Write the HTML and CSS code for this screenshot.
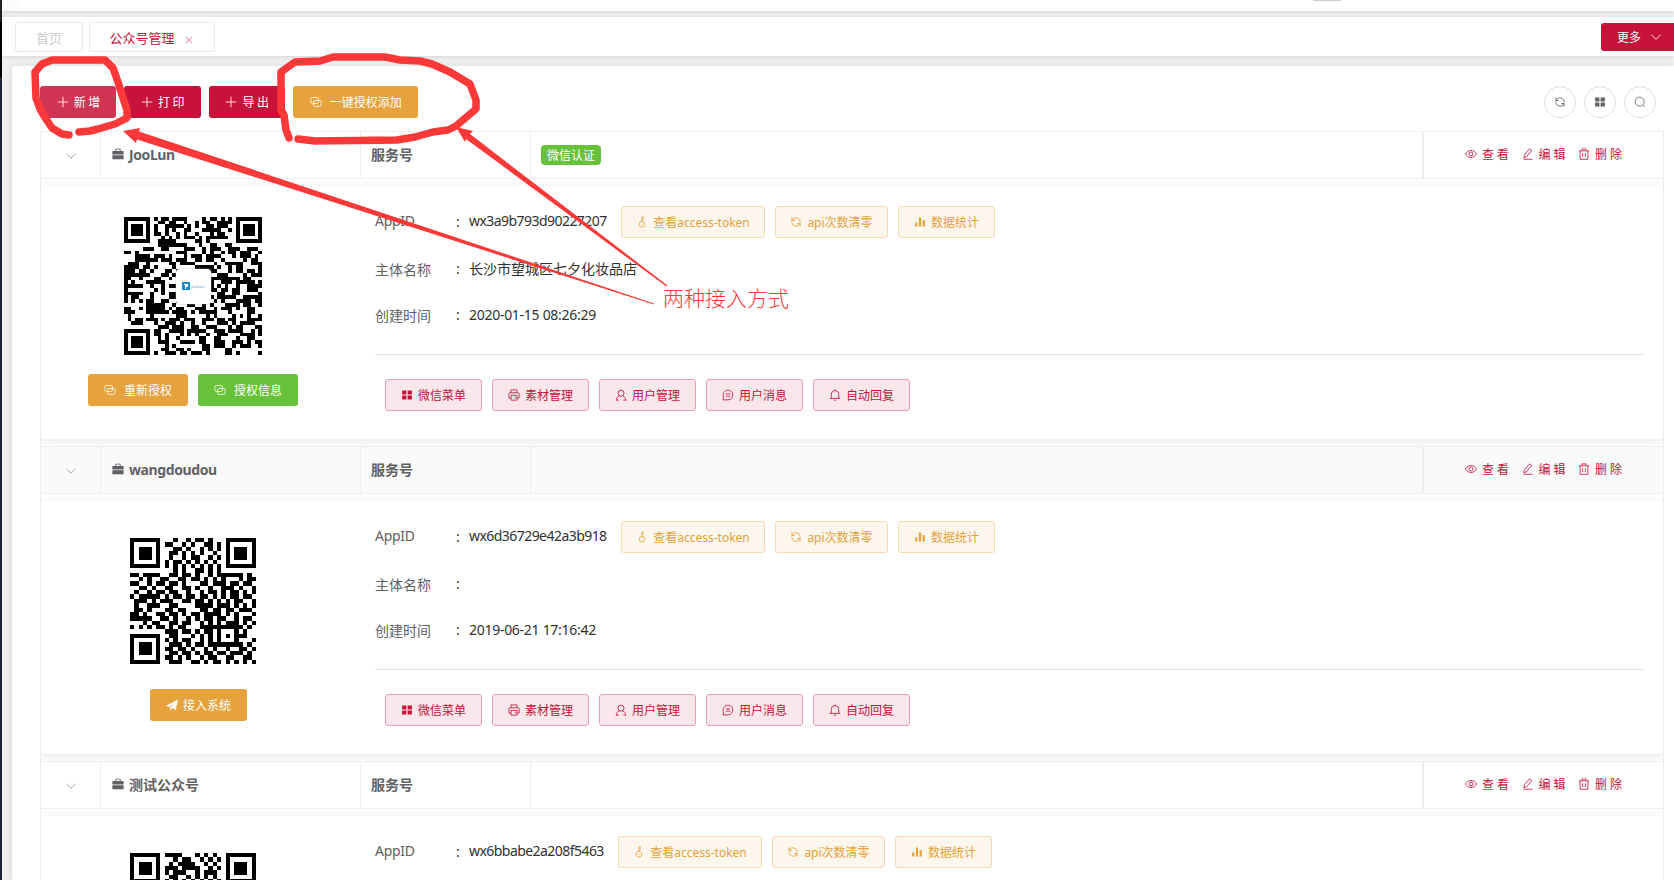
FILE: index.html
```html
<!DOCTYPE html>
<html lang="zh-CN">
<head>
<meta charset="utf-8">
<title>公众号管理</title>
<link rel="stylesheet" href="styles.css">
</head>
<body>
<svg class="defs" aria-hidden="true">
  <symbol id="i-plus" viewBox="0 0 16 16"><path d="M8 1v14M1 8h14"/></symbol>
  <symbol id="i-copy" viewBox="0 0 16 16"><rect x="1" y="2" width="10.5" height="8" rx="2.5"/><path d="M7 13.8h5.5a2.5 2.5 0 0 0 2.5-2.5V8.5a2.5 2.5 0 0 0-2.5-2.5H7a2.5 2.5 0 0 0-2.5 2.5v2.8A2.5 2.5 0 0 0 7 13.8z"/></symbol>
  <symbol id="i-down" viewBox="0 0 16 16"><path d="M2 5l6 6 6-6"/></symbol>
  <symbol id="i-close" viewBox="0 0 16 16"><path d="M2 2l12 12M14 2L2 14"/></symbol>
  <symbol id="i-refresh" viewBox="0 0 16 16"><path d="M2.500 2v4H6.500M2.800 5.800A5.700 5.700 0 0 1 13.700 8.500M13.500 14v-4H9.500M13.200 10.200A5.700 5.700 0 0 1 2.300 7.500"/></symbol>
  <symbol id="i-menu" viewBox="0 0 16 16"><path class="solid" d="M1.500 2h5.700v5.300H1.500zM8.800 2h5.700v5.300H8.800zM1.500 8.800h5.700v5.300H1.500zM8.800 8.800h5.700v5.300H8.800z"/></symbol>
  <symbol id="i-search" viewBox="0 0 16 16"><circle cx="7.500" cy="7.500" r="6"/><path d="M12 12l2.500 2.500"/></symbol>
  <symbol id="i-case" viewBox="0 0 16 16"><path class="solid" d="M.5 4h15v4.700H.5zM.5 9.600h15v5.400H.5z"/><path d="M5 4V1.500h6V4"/></symbol>
  <symbol id="i-eye" viewBox="0 0 16 16"><path d="M.6 8C3.500 1.800 12.500 1.800 15.400 8 12.500 14.200 3.500 14.200.6 8z"/><circle cx="8" cy="8" r="2.600"/></symbol>
  <symbol id="i-edit" viewBox="0 0 16 16"><path d="M2.500 13l.6-4L10 1.200l3 2.200L6.200 11.500zM2 15h12"/></symbol>
  <symbol id="i-del" viewBox="0 0 16 16"><path d="M1 3.800h14M5.500 3.800V1.200h5v2.600M2.800 3.800V15h10.400V3.800M6.200 7v5M9.800 7v5"/></symbol>
  <symbol id="i-key" viewBox="0 0 16 16"><circle cx="8" cy="11" r="3.800"/><path d="M8 7.200V1M8 1.500h3M8 4.200h2.500M8 10.500v1.200"/></symbol>
  <symbol id="i-data" viewBox="0 0 16 16"><path class="solid" d="M1.500 8.500h3V14h-3zM6.500 2h3v12h-3zM11.500 5.500h3V14h-3z"/></symbol>
  <symbol id="i-print" viewBox="0 0 16 16"><path d="M4 5V1.200h8V5M4 12H1.200V6.800Q1.200 5 3 5h10q1.800 0 1.800 1.800V12H12M4 8.500h8v6.300H4zM9 11.500h1.500"/></symbol>
  <symbol id="i-user" viewBox="0 0 16 16"><circle cx="8" cy="5.600" r="4"/><path d="M1.800 14.800c0-3 1.600-4.600 4-5.500M10.200 9.300c2.400.9 4 2.500 4 5.500M1 14.800h4M11 14.800h4"/></symbol>
  <symbol id="i-chat" viewBox="0 0 16 16"><path d="M1.200 14.500h7A6.500 6.500 0 1 0 1.800 10.200q.5 2-.6 4.300zM5 6.500h6M5 9.500h6"/></symbol>
  <symbol id="i-bell" viewBox="0 0 16 16"><path d="M1 12.500h14M3 12.500V7a5 5 0 0 1 10 0v5.500M8 2V.6M6.500 14.800h3"/></symbol>
  <symbol id="i-send" viewBox="0 0 16 16"><path class="solid" d="M0 9L16 .5 13 14.500 8.300 12 6 15.500 5.300 11 13 4 4 10.600z"/></symbol>
</svg>

<div class="app">
  <aside class="rail"></aside>
  <div class="content">
    <header class="topbar"><span class="handle"></span></header>
    <nav class="tabs">
      <a class="tab">首页</a>
      <a class="tab current">公众号管理<svg class="ic close"><use href="#i-close"/></svg></a>
      <button class="more">更多<svg class="ic"><use href="#i-down"/></svg></button>
    </nav>
    <main class="panel">
      <div class="toolbar">
        <button class="btn red spaced hover"><svg class="ic"><use href="#i-plus"/></svg>新增</button>
        <button class="btn red spaced"><svg class="ic"><use href="#i-plus"/></svg>打印</button>
        <button class="btn red spaced"><svg class="ic"><use href="#i-plus"/></svg>导出</button>
        <button class="btn orange"><svg class="ic"><use href="#i-copy"/></svg>一键授权添加</button>
        <div class="tools">
          <button class="round"><svg class="ic"><use href="#i-refresh"/></svg></button>
          <button class="round"><svg class="ic"><use href="#i-menu"/></svg></button>
          <button class="round"><svg class="ic"><use href="#i-search"/></svg></button>
        </div>
      </div>
      <div class="table" id="table"></div>
    </main>
  </div>
</div>

<svg class="marks" viewBox="0 0 1674 880">
  <path class="pen" d="M69 135L62 134 52 128 46 119 40 109 36 98 35 72 42 64 52 60H105L113 68 118 82 123 98 127 110V118L115 124 98 129 90 131 79 132"/>
  <path class="pen" d="M289 138L286 130 284 115 281 110V72L295 62 320 61 333 57H385L400 60 420 61 432 64 450 72 470 84 476 100V109L456 126 448 130 433 132 415 137 397 140 315 141 298 139"/>
  <path class="arrow" d="M123 131L140 128 139 131.500 654 303.500V304.500L137 139.500 136 143zM456 127L473 131 470 134 667.500 285.500 666.500 286.500 466 139 465 142z"/>
  <text class="note" x="663" y="306">两种接入方式</text>
</svg>
<script src="app.js"></script>
</body>
</html>
```
FILE: styles.css
```css
* { box-sizing: border-box; }
body { margin: 0; overflow: hidden; font-family: "Noto Sans", "Noto Sans CJK SC", sans-serif; font-size: 14px; color: #606266; }
button { font-family: inherit; margin: 0; }
.defs { position: absolute; width: 0; height: 0; }
.ic { width: 12px; height: 12px; flex: none; fill: none; stroke: currentColor; stroke-width: 1.1; }
.solid { fill: currentColor; stroke: none; }

.app { display: flex; width: 1674px; height: 880px; overflow: hidden; }
.rail { width: 2px; background: linear-gradient(#20222a 22px, #000 22px, #000 77px, #1b2230 77px); }
.content { flex: 1; min-width: 0; background: #f0f0f0; display: flex; flex-direction: column; }
.topbar { flex: none; height: 11px; background: #fff; border-left: 19px solid #fcfcfc; box-shadow: 0 1px 4px rgba(0,0,0,.12); display: flex; }
.handle { width: 28px; height: 1px; margin-left: 1292px; background: #ccc; }
.tabs { flex: none; height: 39px; margin-top: 6px; padding: 5px 0 0 13px; background: #fff; box-shadow: 0 1px 4px rgba(0,0,0,.12); display: flex; align-items: flex-start; gap: 6px; }
.tab { height: 30px; width: 68px; border: 1px solid #e8eaec; border-radius: 3px; display: flex; align-items: center; justify-content: center; font-size: 13px; color: #ccc; }
.tab.current { width: 126px; color: #c71239; padding-right: 2px; }
.close { width: 8px; height: 8px; margin: 5px 0 0 10px; }
.more { width: 73px; height: 28px; margin: 1px 0 0 auto; padding: 0 0 1px 16px; border: 0; border-radius: 3px 0 0 3px; background: #c71239; color: #fff; font-size: 12px; display: flex; align-items: center; gap: 9px; }
.panel { flex: 1; min-height: 0; margin: 10px 0 0 10px; padding: 20px 10px 0 28px; background: #fff; border-radius: 4px 0 0 0; box-shadow: 0 2px 12px rgba(0,0,0,.1); }

.toolbar { display: flex; height: 45px; gap: 8px; align-items: flex-start; }
.btn { height: 32px; padding: 0 0 1px; border: 1px solid transparent; border-radius: 3px; display: flex; align-items: center; justify-content: center; gap: 5px; font-size: 12px; color: #fff; white-space: nowrap; }
.red { background: #c71239; }
.hover { background: #d03453; }
.spaced { width: 76.400px; padding-left: 3px; letter-spacing: 2.500px; }
.orange { background: #e6a23c; }
.green { background: #67c23a; }
.toolbar .orange { width: 125px; gap: 8px; }
.tools { display: flex; gap: 8px; margin: 0 8px 0 auto; }
.round { width: 32px; height: 32px; padding: 0; border: 1px solid #dcdfe6; border-radius: 50%; background: #fff; color: #606266; display: flex; align-items: center; justify-content: center; }

.table { border: 1px solid #ebeef5; border-bottom: 0; }
.row { display: grid; grid-template-columns: 60px 260px 170px 893px 1fr; height: 46px; }
.row.odd { background: #fafafa; }
.cell { border-right: 1px solid #ebeef5; display: flex; align-items: center; padding: 0 10px 2px 10px; font-weight: 700; }
.cell.arrow-cell { justify-content: center; padding: 2px 0 0; color: #909399; }
.cell.name { padding-left: 11px; gap: 5px; letter-spacing: -.4px; }
.cell.cjk { letter-spacing: 0; }
.cell.state { border-right-width: 2px; padding-bottom: 0; }
.cell:last-child { border-right: 0; }
.tag { height: 20px; width: 60px; border-radius: 4px; background: #67c23a; color: #fff; font-size: 12px; font-weight: 400; display: flex; align-items: center; justify-content: center; }
.actions { justify-content: flex-start; gap: 9.500px; padding-left: 41px; color: #c71239; font-weight: 400; font-size: 12px; letter-spacing: 3px; }
.action { width: 47px; display: flex; align-items: center; gap: 5px; white-space: nowrap; }

.expand { height: 269px; padding: 7px 0; border-top: 1px solid #ebeef5; border-bottom: 1px solid #ebeef5; overflow: hidden; }
.card { height: 253px; background: #fff; border-radius: 4px; box-shadow: 0 2px 12px rgba(0,0,0,.1); display: grid; grid-template-columns: 334px 1fr; }
.side { padding-top: 20px; display: flex; flex-direction: column; align-items: center; padding-right: 30px; }
.qrbox { position: relative; height: 160px; display: flex; align-items: center; justify-content: center; }
.qr { display: block; shape-rendering: crispEdges; }
.logo { position: absolute; width: 35px; height: 35px; border-radius: 4px; background: #fff; box-shadow: 0 0 2px #aaa; display: flex; align-items: center; justify-content: center; gap: 2px; font-size: 4px; color: #5b9bc5; }
.logo svg { width: 8px; height: 8px; }
.side-actions { display: flex; gap: 10px; padding-top: 8px; }
.side-actions .btn { width: 100px; gap: 8px; }
.side-actions .join { width: 97px; gap: 5px; margin-left: 11px; }
.info { padding: 20px 20px 0 0; }
.line { display: flex; align-items: center; height: 32px; margin-bottom: 15px; }
.line:nth-child(2) { margin-bottom: 14px; }
.line:nth-child(3) { margin-bottom: 0; }
.label { width: 81px; }
.line:first-child .label { letter-spacing: -.3px; padding-bottom: 4px; }
.colon { width: 13px; color: #303133; padding-bottom: 2px; }
.value { color: #303133; white-space: nowrap; padding-bottom: 2px; }
.appid { letter-spacing: -.550px; padding-bottom: 3px; }
.date { letter-spacing: -.280px; }
.plain { display: flex; gap: 10px; }
.plain .btn { background: #fdf6ec; border-color: #f5dab1; color: #e6a23c; }
.token { width: 144px; }
.api { width: 113px; }
.stat { width: 97px; }
.rule { height: 1px; background: #dcdfe6; margin: 23px 0 24px; }
.menus { display: flex; gap: 10px; padding-left: 10px; }
.menus .btn { width: 97px; background: #f9e7eb; border-color: #e9a0b0; color: #c71239; }

.marks { position: absolute; left: 0; top: 0; width: 1674px; height: 880px; pointer-events: none; }
.pen { fill: none; stroke: #fd3838; stroke-width: 7.500; stroke-linecap: round; stroke-linejoin: round; }
.arrow { fill: #fd3838; }
.note { fill: #fd3838; font-family: "Noto Sans CJK SC", sans-serif; font-size: 21px; font-weight: 300; }
```
FILE: app.js
```javascript
const accounts = [
  { name: "JooLun", verified: true, appid: "wx3a9b793d90227207", owner: "长沙市望城区七夕化妆品店", created: "2020-01-15 08:26:29", modules: 37, size: 138, width: 152, authorized: true },
  { name: "wangdoudou", appid: "wx6d36729e42a3b918", owner: "", created: "2019-06-21 17:16:42", modules: 29, size: 126, width: 152 },
  { name: "测试公众号", appid: "wx6bbabe2a208f5463", modules: 29, size: 126, width: 149, alt: true, clipped: true }
];

const pattern = [
  "11111110001001011010001111111",
  "10000010110010100110101000001",
  "10111010001101001010101011101",
  "10111010011010101001001011101",
  "10111010010010110010101011101",
  "10000010101101010101001000001",
  "11111110101010101010101111111",
  "00000000001010011010100000000",
  "11011110011011010010111111010",
  "00101001100110110101010001011",
  "11001011011010001101110110110",
  "00110100110011010010011101001",
  "01001011011001001011010110101",
  "10111110101101101101010110110",
  "01110101110011011010101011001",
  "01001110011000011110111010101",
  "01101000110110001101101101110",
  "11010011011010110111101010001",
  "11111001101001010110110010110",
  "00010110011011001010101110101",
  "10101011010110001111111111010",
  "00000000111011010110100010100",
  "11111110011000101010101011100",
  "10000010101011001010100010001",
  "10111010011101011011111111010",
  "10111010110110100101001001101",
  "10111010011011010110110111010",
  "10000010110101001011001100110",
  "11111110011100110101101010101"
];

const altHead = [
  "11111110111100010101001111111",
  "10000010001011001010101000001",
  "10111010010111100101001011101",
  "10111010111011110010101011101",
  "10111010101110010111001011101",
  "10000010011001010101001000001"
];

function qr(a) {
  const n = a.modules;
  let seed = 7, d = "";
  for (let y = 0; y < n; y++) {
    for (let x = 0; x < n; x++) {
      let on;
      if (n === 29) on = ((a.alt && altHead[y]) || pattern[y])[x] === "1";
      else {
        seed = (seed * 1103515245 + 12345) % 2147483648;
        on = seed / 2147483648 < 0.52;
        const fx = x < 8 ? x : n - 1 - x, fy = y < 8 ? y : n - 1 - y;
        if (fx < 8 && fy < 8 && !(x > 8 && y > 8)) {
          const r = Math.max(Math.abs(fx - 3), Math.abs(fy - 3));
          on = r === 3 || r < 2;
        }
      }
      if (on) d += `M${x} ${y}h1v1h-1z`;
    }
  }
  return `<svg class="qr" width="${a.size}" height="${a.size}" viewBox="0 0 ${n} ${n}"><path d="${d}"/></svg>`;
}

const ic = n => `<svg class="ic"><use href="#i-${n}"/></svg>`;
const btn = (cls, icon, text) => `<button class="btn ${cls}">${ic(icon)}${text}</button>`;
const line = (label, value, extra = "") => `<div class="line"><span class="label">${label}</span><span class="colon">:</span>${value}${extra}</div>`;

const details = a => a.clipped ? "" : `
      ${line("主体名称", `<span class="value">${a.owner}</span>`)}
      ${line("创建时间", `<span class="value date">${a.created}</span>`)}
      <div class="rule"></div>
      <div class="menus">${btn("", "menu", "微信菜单")}${btn("", "print", "素材管理")}${btn("", "user", "用户管理")}${btn("", "chat", "用户消息")}${btn("", "bell", "自动回复")}</div>`;

const sideActions = a => a.clipped ? "" : `
      <div class="side-actions">${a.authorized ? btn("orange", "copy", "重新授权") + btn("green", "copy", "授权信息") : btn("orange join", "send", "接入系统")}</div>`;

document.getElementById("table").innerHTML = accounts.map((a, i) => `
  <div class="row ${i % 2 ? "odd" : ""}">
    <div class="cell arrow-cell">${ic("down")}</div>
    <div class="cell name ${a.alt ? "cjk" : ""}">${ic("case")}${a.name}</div>
    <div class="cell">服务号</div>
    <div class="cell state">${a.verified ? '<span class="tag">微信认证</span>' : ""}</div>
    <div class="cell actions">
      <span class="action">${ic("eye")}查看</span><span class="action">${ic("edit")}编辑</span><span class="action">${ic("del")}删除</span>
    </div>
  </div>
  <div class="expand"><div class="card">
    <div class="side">
      <div class="qrbox">${qr(a)}${a.verified ? '<span class="logo"><svg viewBox="0 0 8 8"><path fill="#168bd0" d="M0 0h8v8H0z"/><path fill="#fff" d="M2 2h4v3H4v2H3V3H2z"/></svg>JooLun</span>' : ""}</div>${sideActions(a)}
    </div>
    <div class="info">
      ${line("AppID", `<span class="value appid" style="width:${a.width}px">${a.appid}</span>`, `<div class="plain">${btn("token", "key", "查看access-token")}${btn("api", "refresh", "api次数清零")}${btn("stat", "data", "数据统计")}</div>`)}${details(a)}
    </div>
  </div></div>`).join("");
```
